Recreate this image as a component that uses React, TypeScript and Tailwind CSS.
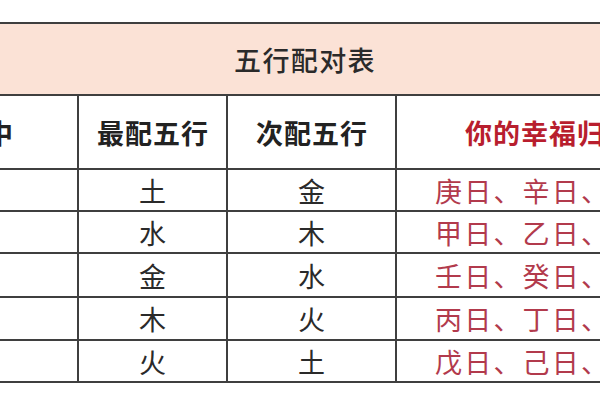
const rows = [
  { a: '土', b: '金', c: '庚日、辛日、申日、酉日' },
  { a: '水', b: '木', c: '甲日、乙日、寅日、卯日' },
  { a: '金', b: '水', c: '壬日、癸日、亥日、子日' },
  { a: '木', b: '火', c: '丙日、丁日、巳日、午日' },
  { a: '火', b: '土', c: '戊日、己日、辰日、戌日' },
]

const rowHeights = ['h-[42px]', 'h-[42px]', 'h-[44px]', 'h-[43px]', 'h-[42px]']

export default function App() {
  return (
    <div
      className="w-[600px] h-[400px] bg-white overflow-hidden pt-[22px]"
      style={{ fontFamily: '"Noto Sans CJK SC", "Noto Sans CJK JP", sans-serif' }}
    >
      <div className="border-t-2 border-[#3f3f3f]">
        {/* Title */}
        <div className="h-[72px] bg-[#fbe2d6] border-b-2 border-[#3f3f3f] flex items-center justify-center pl-[10px] text-[27px] tracking-[1.4px] font-medium text-[#2a2a2a] leading-none">
          五行配对表
        </div>

        {/* Header */}
        <div className="grid grid-cols-[79px_149px_169px_1fr] h-[74px] border-b-2 border-[#3f3f3f] text-[27px] leading-none font-bold tracking-[1px]">
          <div className="border-r-2 border-[#3f3f3f] flex items-center overflow-hidden">
            <span className="ml-[-14px] text-[#222]">中</span>
          </div>
          <div className="border-r-2 border-[#3f3f3f] flex items-center justify-center pl-[1px] text-[#222]">
            最配五行
          </div>
          <div className="border-r-2 border-[#3f3f3f] flex items-center justify-center pl-[1px] text-[#222]">
            次配五行
          </div>
          <div className="flex items-center overflow-hidden whitespace-nowrap pl-[68px] text-[#b81e2e]">
            你的幸福归宿日
          </div>
        </div>

        {/* Rows */}
        {rows.map((r, i) => (
          <div
            key={r.a}
            className={`grid grid-cols-[79px_149px_169px_1fr] ${rowHeights[i]} border-b-2 border-[#3f3f3f] text-[27px] leading-none`}
          >
            <div className="border-r-2 border-[#3f3f3f]" />
            <div className="border-r-2 border-[#3f3f3f] flex items-center justify-center text-[#2a2a2a]">
              {r.a}
            </div>
            <div className="border-r-2 border-[#3f3f3f] flex items-center justify-center text-[#2a2a2a]">
              {r.b}
            </div>
            <div className="flex items-center overflow-hidden whitespace-nowrap pl-[38px] tracking-[2.2px] text-[#b23a4c]">
              {r.c}
            </div>
          </div>
        ))}
      </div>
    </div>
  )
}
